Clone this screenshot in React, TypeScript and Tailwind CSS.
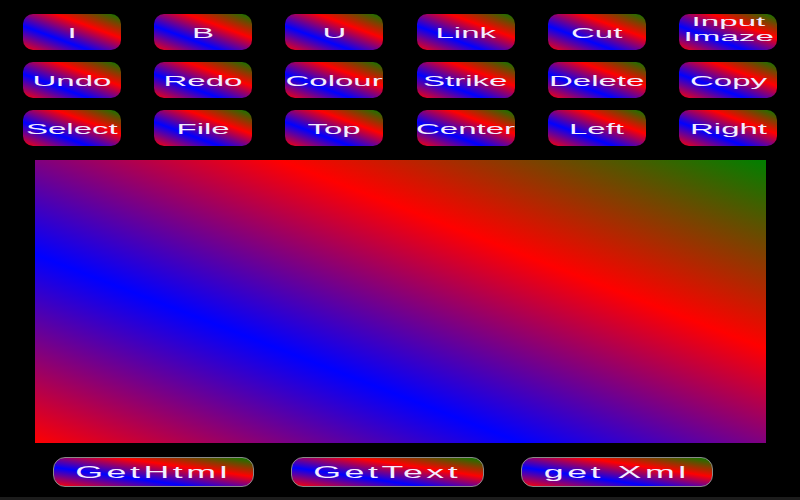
const grad = 'bg-[linear-gradient(to_top_right,#ff0000,#0000ff,#ff0000,#008000)]';

const toolButtons: string[][] = [
  ['I', 'B', 'U', 'Link', 'Cut', 'Input\nImaze'],
  ['Undo', 'Redo', 'Colour', 'Strike', 'Delete', 'Copy'],
  ['Select', 'File', 'Top', 'Center', 'Left', 'Right'],
];

function ToolButton({ label }: { label: string }) {
  const lines = label.split('\n');
  const twoLines = lines.length > 1;
  return (
    <button
      className={`${grad} w-[98px] h-[36px] rounded-[10px] flex flex-col items-center justify-center overflow-hidden ${twoLines ? 'pb-[7px]' : ''}`}
    >
      {lines.map((line) => (
        <span
          key={line}
          className={
            twoLines
              ? 'inline-block scale-x-[2.55] text-[13px] leading-[15px] text-[#f3ecff] whitespace-nowrap'
              : 'inline-block scale-x-[2.2] text-[15px] leading-none text-[#f3ecff] whitespace-nowrap'
          }
        >
          {line}
        </span>
      ))}
    </button>
  );
}

function ActionButton({ label, width }: { label: string; width: string }) {
  return (
    <button
      className={`${grad} ${width} h-[30px] rounded-[12px] border border-[#8a8a8a] flex items-center justify-center overflow-hidden`}
    >
      <span className="inline-block scale-x-[2.1] text-[17px] leading-none tracking-[0.1em] text-[#f3ecff] whitespace-nowrap">
        {label}
      </span>
    </button>
  );
}

export default function App() {
  return (
    <div className="w-[800px] h-[500px] bg-black flex flex-col font-['Liberation_Sans',Arial,sans-serif] overflow-hidden">
      {/* Toolbar */}
      <div className="pt-[14px] px-[6px] grid grid-cols-6 gap-y-[12px] justify-items-center">
        {toolButtons.flat().map((label) => (
          <ToolButton key={label} label={label} />
        ))}
      </div>

      {/* Editor */}
      <div className={`${grad} ml-[35px] mt-[14px] w-[731px] h-[283px]`} />

      {/* Actions */}
      <div className="flex items-center pl-[53px] gap-[37px] mt-[14px]">
        <ActionButton label="GetHtml" width="w-[201px]" />
        <ActionButton label="GetText" width="w-[193px]" />
        <ActionButton label="get Xml" width="w-[192px]" />
      </div>

      <div className="mt-auto h-[3px] bg-[#1c1c1c]" />
    </div>
  );
}
